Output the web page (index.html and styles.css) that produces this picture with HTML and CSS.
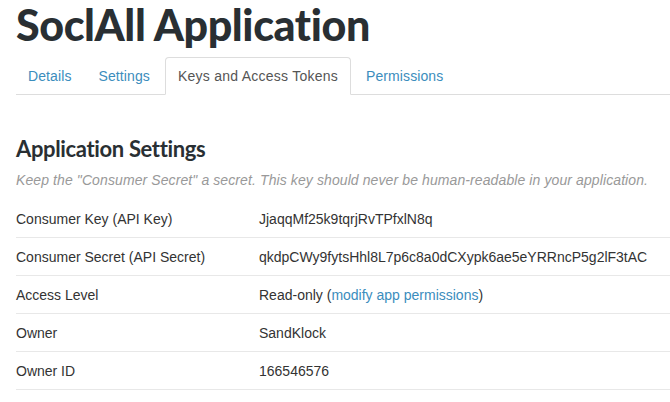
FILE: index.html
```html
<!DOCTYPE html>
<html>
<head>
<meta charset="utf-8">
<link rel="stylesheet" href="styles.css">
</head>
<body>
<div class="page">
  <h1 class="title">SoclAll Application</h1>
  <ul class="tabs">
    <li><a class="tab" href="#">Details</a></li>
    <li><a class="tab" href="#">Settings</a></li>
    <li><a class="tab active" href="#">Keys and Access Tokens</a></li>
    <li><a class="tab" href="#">Permissions</a></li>
  </ul>
  <h2 class="section">Application Settings</h2>
  <p class="hint">Keep the "Consumer Secret" a secret. This key should never be human-readable in your application.</p>
  <div class="rows">
    <div class="row"><span class="label">Consumer Key (API Key)</span><span class="value">JjaqqMf25k9tqrjRvTPfxlN8q</span></div>
    <div class="row"><span class="label">Consumer Secret (API Secret)</span><span class="value">qkdpCWy9fytsHhl8L7p6c8a0dCXypk6ae5eYRRncP5g2lF3tAC</span></div>
    <div class="row"><span class="label">Access Level</span><span class="value">Read-only (<a class="link" href="#">modify app permissions</a>)</span></div>
    <div class="row"><span class="label">Owner</span><span class="value">SandKlock</span></div>
    <div class="row"><span class="label">Owner ID</span><span class="value">166546576</span></div>
  </div>
</div>
</body>
</html>
```
FILE: styles.css
```css
html, body {
  margin: 0;
  padding: 0;
  background: #fff;
}
body {
  font-family: "Liberation Sans", Arial, sans-serif;
  font-size: 14px;
  color: #333;
  overflow: hidden;
}
.page {
  padding-left: 16px;
}
.title {
  margin: 0;
  font-family: Lato, "Open Sans", sans-serif;
  font-weight: 900;
  font-size: 43px;
  line-height: 50px;
  color: #292f33;
  letter-spacing: -0.4px;
}
.tabs {
  list-style: none;
  margin: 7px 0 0 0;
  padding: 0;
  display: flex;
  border-bottom: 1px solid #ddd;
}
.tabs li {
  margin-bottom: -1px;
  margin-right: 3px;
}
.tab {
  display: block;
  padding: 8px 11px;
  line-height: 20px;
  border: 1px solid transparent;
  border-radius: 4px 4px 0 0;
  color: #3b8dbd;
  text-decoration: none;
  letter-spacing: 0.1px;
}
.tab.active {
  color: #555;
  background: #fff;
  border-color: #ddd #ddd transparent;
  padding: 8px 12px;
  letter-spacing: 0.25px;
}
.section {
  margin: 39px 0 0 0;
  font-family: Lato, sans-serif;
  font-weight: 700;
  font-size: 22px;
  line-height: 30px;
  color: #292f33;
  letter-spacing: -0.35px;
}
.hint {
  margin: 6px 0 0 0;
  font-style: italic;
  color: #999;
  line-height: 20px;
  white-space: nowrap;
  letter-spacing: 0.1px;
}
.rows {
  margin-top: 10px;
}
.row {
  display: flex;
  height: 37px;
  align-items: center;
  border-bottom: 1px solid #e8e8e8;
}
.label {
  width: 243px;
  flex: none;
}
.value {
  white-space: nowrap;
}
.link {
  color: #3b8dbd;
  text-decoration: none;
}
```
